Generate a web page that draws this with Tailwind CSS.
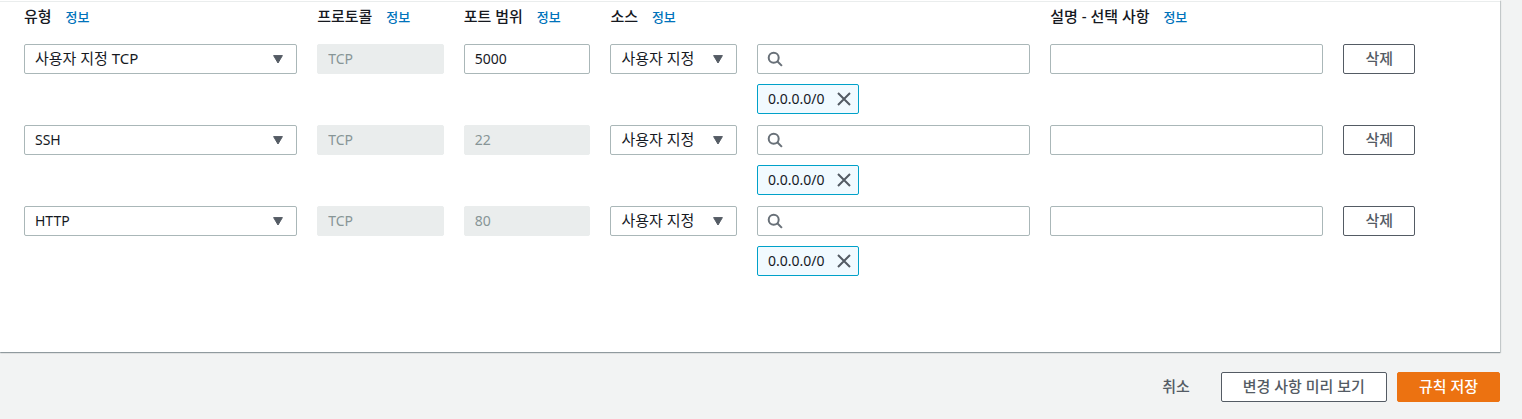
<!DOCTYPE html>
<html lang="ko">
<head>
  <meta charset="UTF-8">
  <meta name="viewport" content="width=device-width, initial-scale=1.0">
  <title>인바운드 규칙 편집</title>
  <script src="https://cdn.jsdelivr.net/npm/@tailwindcss/browser@4"></script>
</head>
<body class="bg-[#f2f3f3] text-[#16191f] text-sm font-['Noto_Sans','Noto_Sans_CJK_KR',sans-serif]">

  <main class="mr-[22px] pt-px bg-white shadow-[0_1px_1px_0_rgba(0,28,36,0.3),1px_1px_1px_0_rgba(0,28,36,0.15)]">
    <div class="border-t border-[#eaeded] pl-6 pr-[30px] pb-[76px]">
      <!-- column headings -->
      <div class="grid grid-cols-10 gap-x-5 h-[42px] pt-1 text-[15px] leading-5 font-medium whitespace-nowrap">
        <div class="col-span-2">유형 <a href="#" class="ml-2.5 text-[13px] text-[#0073bb]">정보</a></div>
        <div>프로토콜 <a href="#" class="ml-2.5 text-[13px] text-[#0073bb]">정보</a></div>
        <div>포트 범위 <a href="#" class="ml-2.5 text-[13px] text-[#0073bb]">정보</a></div>
        <div class="col-span-3">소스 <a href="#" class="ml-2.5 text-[13px] text-[#0073bb]">정보</a></div>
        <div class="col-span-2">설명 - 선택 사항 <a href="#" class="ml-2.5 text-[13px] text-[#0073bb]">정보</a></div>
      </div>
      <div id="rules" class="grid gap-[11px]"></div>
    </div>
  </main>

  <footer class="flex justify-end items-center gap-2.5 mr-[22px] py-5 text-[15px] font-medium text-[#545b64]">
    <button type="button" class="h-[30px] px-[21px] pb-0.5 leading-6">취소</button>
    <button type="button" class="h-[30px] px-[21px] pb-0.5 leading-6 bg-white border border-[#545b64] rounded-xs">변경 사항 미리 보기</button>
    <button type="button" class="h-[30px] px-[21px] pb-0.5 leading-6 bg-[#ec7211] border border-[#ec7211] rounded-xs text-white">규칙 저장</button>
  </footer>

  <script>
    const rules = [
      { type: "사용자 지정 TCP", size: "text-[15px]", port: "5000", custom: true },
      { type: "SSH", size: "text-sm", port: "22", custom: false },
      { type: "HTTP", size: "text-sm", port: "80", custom: false },
    ];

    const arrow = `<svg class="absolute right-3.5 top-[11px] pointer-events-none" width="10" height="9" viewBox="0 0 10 9"><path d="M.6.6h8.8L5 8z" fill="#545b64" stroke="#545b64" stroke-linejoin="round"/></svg>`;

    document.getElementById("rules").innerHTML = rules.map((rule) => `
      <div class="grid grid-cols-10 gap-x-5 items-start">
        <div class="relative col-span-2">
          <select aria-label="유형" class="block appearance-none w-full h-[30px] pl-2.5 pr-8 bg-white border border-[#aab7b8] rounded-xs ${rule.size}"><option>${rule.type}</option></select>
          ${arrow}
        </div>
        <input aria-label="프로토콜" value="TCP" disabled class="w-full h-[30px] px-2.5 pb-0.5 border border-[#eaeded] rounded-xs bg-[#eaeded] text-[#879596]">
        <input aria-label="포트 범위" value="${rule.port}" ${rule.custom ? "" : "disabled"} class="w-full h-[30px] px-2.5 pb-0.5 border border-[#aab7b8] rounded-xs bg-white disabled:border-[#eaeded] disabled:bg-[#eaeded] disabled:text-[#879596]">
        <div class="relative">
          <select aria-label="소스" class="block appearance-none w-full h-[30px] pl-2.5 pr-8 bg-white border border-[#aab7b8] rounded-xs text-[15px]"><option>사용자 지정</option></select>
          ${arrow}
        </div>
        <div class="col-span-2">
          <div class="relative">
            <input type="text" aria-label="소스 검색" class="block w-full h-[30px] pl-8 pr-2.5 bg-white border border-[#aab7b8] rounded-xs">
            <svg class="absolute left-2.5 top-[7px] pointer-events-none" width="16" height="16" viewBox="0 0 16 16" fill="none" stroke="#687078" stroke-width="2"><circle cx="6.7" cy="6.7" r="5"/><path d="M10.3 10.3l4.6 4.6"/></svg>
          </div>
          <div class="inline-flex items-center gap-[11px] h-[30px] mt-2.5 pl-2.5 pr-1.5 align-top bg-[#f1faff] border border-[#00a1c9] rounded-xs">
            <span>0.0.0.0/0</span>
            <button type="button" aria-label="0.0.0.0/0 제거">
              <svg width="16" height="16" viewBox="0 0 16 16" fill="none" stroke="#545b64" stroke-width="2"><path d="M2 2l12 12M14 2L2 14"/></svg>
            </button>
          </div>
        </div>
        <input type="text" aria-label="설명" class="col-span-2 w-full h-[30px] px-2.5 bg-white border border-[#aab7b8] rounded-xs">
        <button type="button" class="justify-self-start h-[30px] px-[21px] pb-0.5 leading-6 bg-white border border-[#545b64] rounded-xs text-[15px] font-medium text-[#545b64]">삭제</button>
      </div>`).join("");
  </script>

</body>
</html>
